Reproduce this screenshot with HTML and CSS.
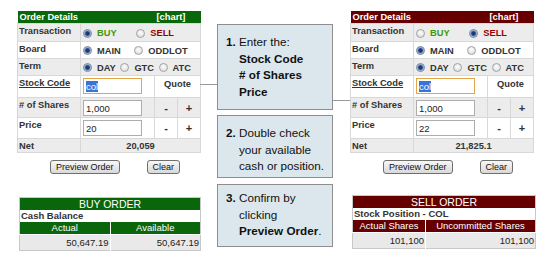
FILE: index.html
```html
<!DOCTYPE html>
<html lang="en">
<head>
  <meta charset="UTF-8">
  <title>Order Entry Guide</title>
  <link rel="stylesheet" href="styles.css">
</head>
<body>
  <div class="page">

    <div class="side buy">
      <table class="order">
        <colgroup><col class="c-label"><col class="c-input"><col class="c-step"><col class="c-step"></colgroup>
        <tr class="r-head">
          <th colspan="2">Order Details</th>
          <th colspan="2" class="chart">[chart]</th>
        </tr>
        <tr class="r-tx shade">
          <td class="label">Transaction</td>
          <td colspan="3" class="opts">
            <span class="opt gap-lg"><span class="radio on"></span><b class="txt-buy">BUY</b></span>
            <span class="opt"><span class="radio"></span><b class="txt-sell">SELL</b></span>
          </td>
        </tr>
        <tr class="r-board">
          <td class="label">Board</td>
          <td colspan="3" class="opts">
            <span class="opt gap-md"><span class="radio on"></span><b>MAIN</b></span>
            <span class="opt"><span class="radio"></span><b>ODDLOT</b></span>
          </td>
        </tr>
        <tr class="r-term shade">
          <td class="label">Term</td>
          <td colspan="3" class="opts">
            <span class="opt gap-sm"><span class="radio on"></span><b>DAY</b></span>
            <span class="opt gap-sm"><span class="radio"></span><b>GTC</b></span>
            <span class="opt"><span class="radio"></span><b>ATC</b></span>
          </td>
        </tr>
        <tr class="r-stock">
          <td class="label"><u>Stock Code</u></td>
          <td class="entry"><div class="field focus"><span class="sel">col</span></div></td>
          <td colspan="2" class="quote">Quote</td>
        </tr>
        <tr class="r-shares shade">
          <td class="label"># of Shares</td>
          <td class="entry"><div class="field">1,000</div></td>
          <td class="step">-</td>
          <td class="step">+</td>
        </tr>
        <tr class="r-price">
          <td class="label">Price</td>
          <td class="entry"><div class="field">20</div></td>
          <td class="step">-</td>
          <td class="step">+</td>
        </tr>
        <tr class="r-net shade">
          <td class="label">Net</td>
          <td colspan="3" class="net">20,059</td>
        </tr>
      </table>

      <div class="actions">
        <button class="btn">Preview Order</button>
        <button class="btn">Clear</button>
      </div>

      <table class="result">
        <tr><th colspan="2" class="title">BUY ORDER</th></tr>
        <tr><td colspan="2" class="sub">Cash Balance</td></tr>
        <tr class="cols"><th>Actual</th><th>Available</th></tr>
        <tr class="vals"><td>50,647.19</td><td>50,647.19</td></tr>
      </table>
    </div>

    <div class="steps">
      <div class="step-box first">
        <p><b>1.</b> Enter the:<br><b>Stock Code</b><br><b># of Shares</b><br><b>Price</b></p>
      </div>
      <div class="step-box second">
        <p><b>2.</b> Double check<br>your available<br>cash or position.</p>
      </div>
      <div class="step-box third">
        <p><b>3.</b> Confirm by<br>clicking<br><b>Preview Order</b>.</p>
      </div>
    </div>

    <div class="side sell">
      <table class="order">
        <colgroup><col class="c-label"><col class="c-input"><col class="c-step"><col class="c-step"></colgroup>
        <tr class="r-head">
          <th colspan="2">Order Details</th>
          <th colspan="2" class="chart">[chart]</th>
        </tr>
        <tr class="r-tx shade">
          <td class="label">Transaction</td>
          <td colspan="3" class="opts">
            <span class="opt gap-lg"><span class="radio"></span><b class="txt-buy">BUY</b></span>
            <span class="opt"><span class="radio on"></span><b class="txt-sell">SELL</b></span>
          </td>
        </tr>
        <tr class="r-board">
          <td class="label">Board</td>
          <td colspan="3" class="opts">
            <span class="opt gap-md"><span class="radio on"></span><b>MAIN</b></span>
            <span class="opt"><span class="radio"></span><b>ODDLOT</b></span>
          </td>
        </tr>
        <tr class="r-term shade">
          <td class="label">Term</td>
          <td colspan="3" class="opts">
            <span class="opt gap-sm"><span class="radio on"></span><b>DAY</b></span>
            <span class="opt gap-sm"><span class="radio"></span><b>GTC</b></span>
            <span class="opt"><span class="radio"></span><b>ATC</b></span>
          </td>
        </tr>
        <tr class="r-stock">
          <td class="label"><u>Stock Code</u></td>
          <td class="entry"><div class="field focus"><span class="sel">col</span></div></td>
          <td colspan="2" class="quote">Quote</td>
        </tr>
        <tr class="r-shares shade">
          <td class="label"># of Shares</td>
          <td class="entry"><div class="field">1,000</div></td>
          <td class="step">-</td>
          <td class="step">+</td>
        </tr>
        <tr class="r-price">
          <td class="label">Price</td>
          <td class="entry"><div class="field">22</div></td>
          <td class="step">-</td>
          <td class="step">+</td>
        </tr>
        <tr class="r-net shade">
          <td class="label">Net</td>
          <td colspan="3" class="net">21,825.1</td>
        </tr>
      </table>

      <div class="actions">
        <button class="btn">Preview Order</button>
        <button class="btn">Clear</button>
      </div>

      <table class="result">
        <tr><th colspan="2" class="title">SELL ORDER</th></tr>
        <tr><td colspan="2" class="sub">Stock Position - COL</td></tr>
        <tr class="cols"><th class="narrow">Actual Shares</th><th>Uncommitted Shares</th></tr>
        <tr class="vals"><td>101,100</td><td>101,100</td></tr>
      </table>
    </div>

  </div>
</body>
</html>
```

FILE: styles.css
```css
body {
  margin: 0;
  font-family: "Liberation Sans", Arial, sans-serif;
  color: #333;
  background: #fff;
}
.page {
  display: flex;
  align-items: flex-start;
  gap: 17px;
  padding: 11px 0 0 17px;
}
.side {
  width: 183px;
}

/* order form */
.order {
  width: 183px;
  border-collapse: collapse;
  table-layout: fixed;
  font-size: 9.3px;
}
.c-label { width: 63px; }
.c-input { width: 74px; }
.c-step { width: 23px; }
.order td {
  border: 1px solid #d8d8d8;
  padding: 0 2px;
}
.order .shade td {
  background: #ececec;
}
.r-head th {
  height: 12px;
  padding: 0 2px;
  color: #fff;
  font-weight: bold;
  text-align: left;
  line-height: 12px;
}
.r-head th.chart {
  text-align: right;
  padding-right: 20px;
}
.buy .r-head th { background: #0a660a; }
.sell .r-head th { background: #660000; }
.r-tx { height: 18px; }
.r-board { height: 17px; }
.r-term { height: 17px; }
.r-stock { height: 22px; }
.r-shares { height: 20px; }
.r-price { height: 21px; }
.r-net { height: 14px; }
.order td.label {
  vertical-align: top;
  padding: 2px 1px 0;
  font-weight: bold;
}
.opts {
  white-space: nowrap;
  padding-top: 3px !important;
}
.opt {
  display: inline-flex;
  align-items: center;
}
.opt b { font-weight: bold; }
.gap-lg { margin-right: 17px; }
.gap-md { margin-right: 11px; }
.gap-sm { margin-right: 2px; }
.radio {
  display: inline-block;
  width: 9px;
  height: 9px;
  box-sizing: border-box;
  border: 1px solid #a4a4a4;
  border-radius: 50%;
  background: radial-gradient(circle at 50% 40%, #fff, #d4d4d4);
  margin-right: 5px;
}
.radio.on {
  border-color: #7f8ea6;
  background: radial-gradient(circle, #1c3a78 0 1.8px, #7d98c4 2.6px, #e2e7ee 4.5px);
}
.txt-buy { color: #3a9a00; }
.txt-sell { color: #990000; }
.order td.entry {
  vertical-align: top;
  padding: 2px 0 0 2px;
}
.field {
  width: 59px;
  height: 16px;
  box-sizing: border-box;
  border: 1px solid #adadad;
  background: #fff;
  padding: 3px 2px 0;
  font-size: 9.5px;
  line-height: 10px;
  color: #222;
}
.field.focus {
  border-color: #e2a548;
}
.sel {
  background: #3a73d6;
  color: #fff;
}
.quote {
  vertical-align: top;
  text-align: center;
  font-weight: bold;
  padding-top: 3px !important;
}
.step {
  text-align: center;
  font-weight: bold;
  font-size: 11px;
}
.net {
  text-align: center;
  font-weight: bold;
}

/* buttons */
.actions {
  display: flex;
  gap: 27px;
  margin-top: 7px;
  padding-left: 33px;
}
.btn {
  height: 14px;
  padding: 0 5px;
  font-family: "Liberation Sans", Arial, sans-serif;
  font-size: 9px;
  line-height: 12px;
  color: #111;
  border: 1px solid #6f6f6f;
  border-radius: 3px;
  background: linear-gradient(#f7f7f7, #d9d9d9);
}

/* balance tables */
.result {
  margin: 23px 0 0 2px;
  width: 182px;
  border-collapse: collapse;
  border: 1px solid #c8c8c8;
  font-size: 9.5px;
}
.sell .result {
  margin-top: 21px;
  width: 184px;
}
.result th {
  color: #fff;
  font-weight: normal;
  height: 12px;
  padding: 0;
  line-height: 12px;
}
.buy .result th { background: #0a660a; }
.sell .result th { background: #660000; }
.result th.title {
  font-size: 10.5px;
}
.result .sub {
  height: 12px;
  padding: 0 1px;
  font-weight: bold;
  background: #fff;
  line-height: 12px;
}
.result .cols th + th,
.result .vals td + td {
  border-left: 1px solid #fff;
}
.result th.narrow {
  width: 72px;
}
.result .vals td {
  height: 15px;
  padding: 0 1px;
  background: #e9e9e9;
  text-align: right;
  color: #222;
  border-top: 1px solid #fff;
}

/* step notes */
.steps {
  width: 116px;
  padding-top: 13px;
  display: flex;
  flex-direction: column;
  gap: 5px;
}
.step-box {
  position: relative;
  box-sizing: border-box;
  height: 63px;
  border: 1px solid #8e8e8e;
  background: #dbe7ec;
  padding: 9px 2px 0 8px;
  font-size: 11.7px;
  line-height: 16.5px;
  color: #111;
  white-space: nowrap;
}
.step-box p {
  margin: 0;
  padding-left: 13px;
  text-indent: -13px;
}
.step-box.first {
  height: 86px;
}
.step-box.third {
  margin-top: 1px;
  padding-top: 5px;
}
.step-box.first::before,
.step-box.first::after {
  content: "";
  position: absolute;
  width: 17px;
  border-top: 1px solid #999;
}
.step-box.first::before {
  left: -18px;
  top: 59px;
}
.step-box.first::after {
  right: -18px;
  top: 75px;
}
```
